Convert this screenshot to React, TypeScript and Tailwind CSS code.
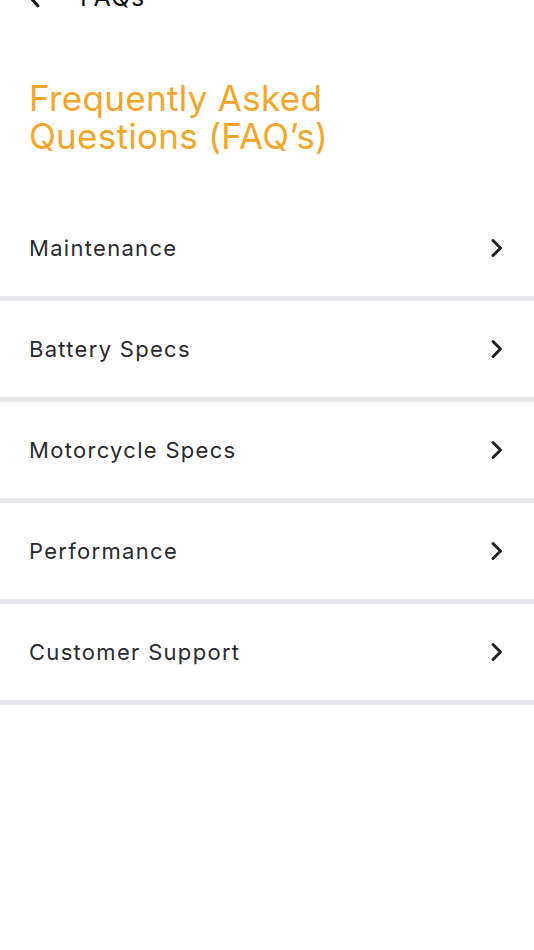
import React from "react";

const items = ["Maintenance", "Battery Specs", "Motorcycle Specs", "Performance", "Customer Support"];

function Chevron() {
  return (
    <svg width="14" height="20" viewBox="0 0 14 20" fill="none">
      <path d="M3 2.5 L10.5 10 L3 17.5" stroke="#1f1f22" strokeWidth="3" strokeLinecap="round" strokeLinejoin="round" />
    </svg>
  );
}

export default function App() {
  return (
    <div className="w-[534px] h-[950px] bg-white overflow-hidden" style={{ fontFamily: "Inter, 'Noto Sans', sans-serif" }}>
      <div className="h-[32px] -mt-[19px] flex items-center">
        <div className="w-[80px] pl-[26px] flex items-center">
          <svg width="16" height="24" viewBox="0 0 16 24" fill="none">
            <path d="M12 3 L4 12 L12 21" stroke="#111" strokeWidth="3" strokeLinecap="round" strokeLinejoin="round" />
          </svg>
        </div>
        <span className="text-[25px] leading-[32px] tracking-[1px] text-[#111]">FAQs</span>
      </div>
      <h1 className="mt-[66px] pl-[29px] text-[35px] leading-[38px] text-[#F4A62A] font-normal tracking-[0.3px]">
        Frequently Asked
        <br />
        Questions (FAQ’s)
      </h1>
      <div className="mt-[45px] flex flex-col">
        {items.map((t) => (
          <div key={t} className="h-[101px] flex items-center justify-between pl-[29px] pr-[30px] border-b-[5px] border-[#e6e6ea]">
            <span className="text-[22px] tracking-[1.3px] text-[#2a2a2e]">{t}</span>
            <Chevron />
          </div>
        ))}
      </div>
    </div>
  );
}
